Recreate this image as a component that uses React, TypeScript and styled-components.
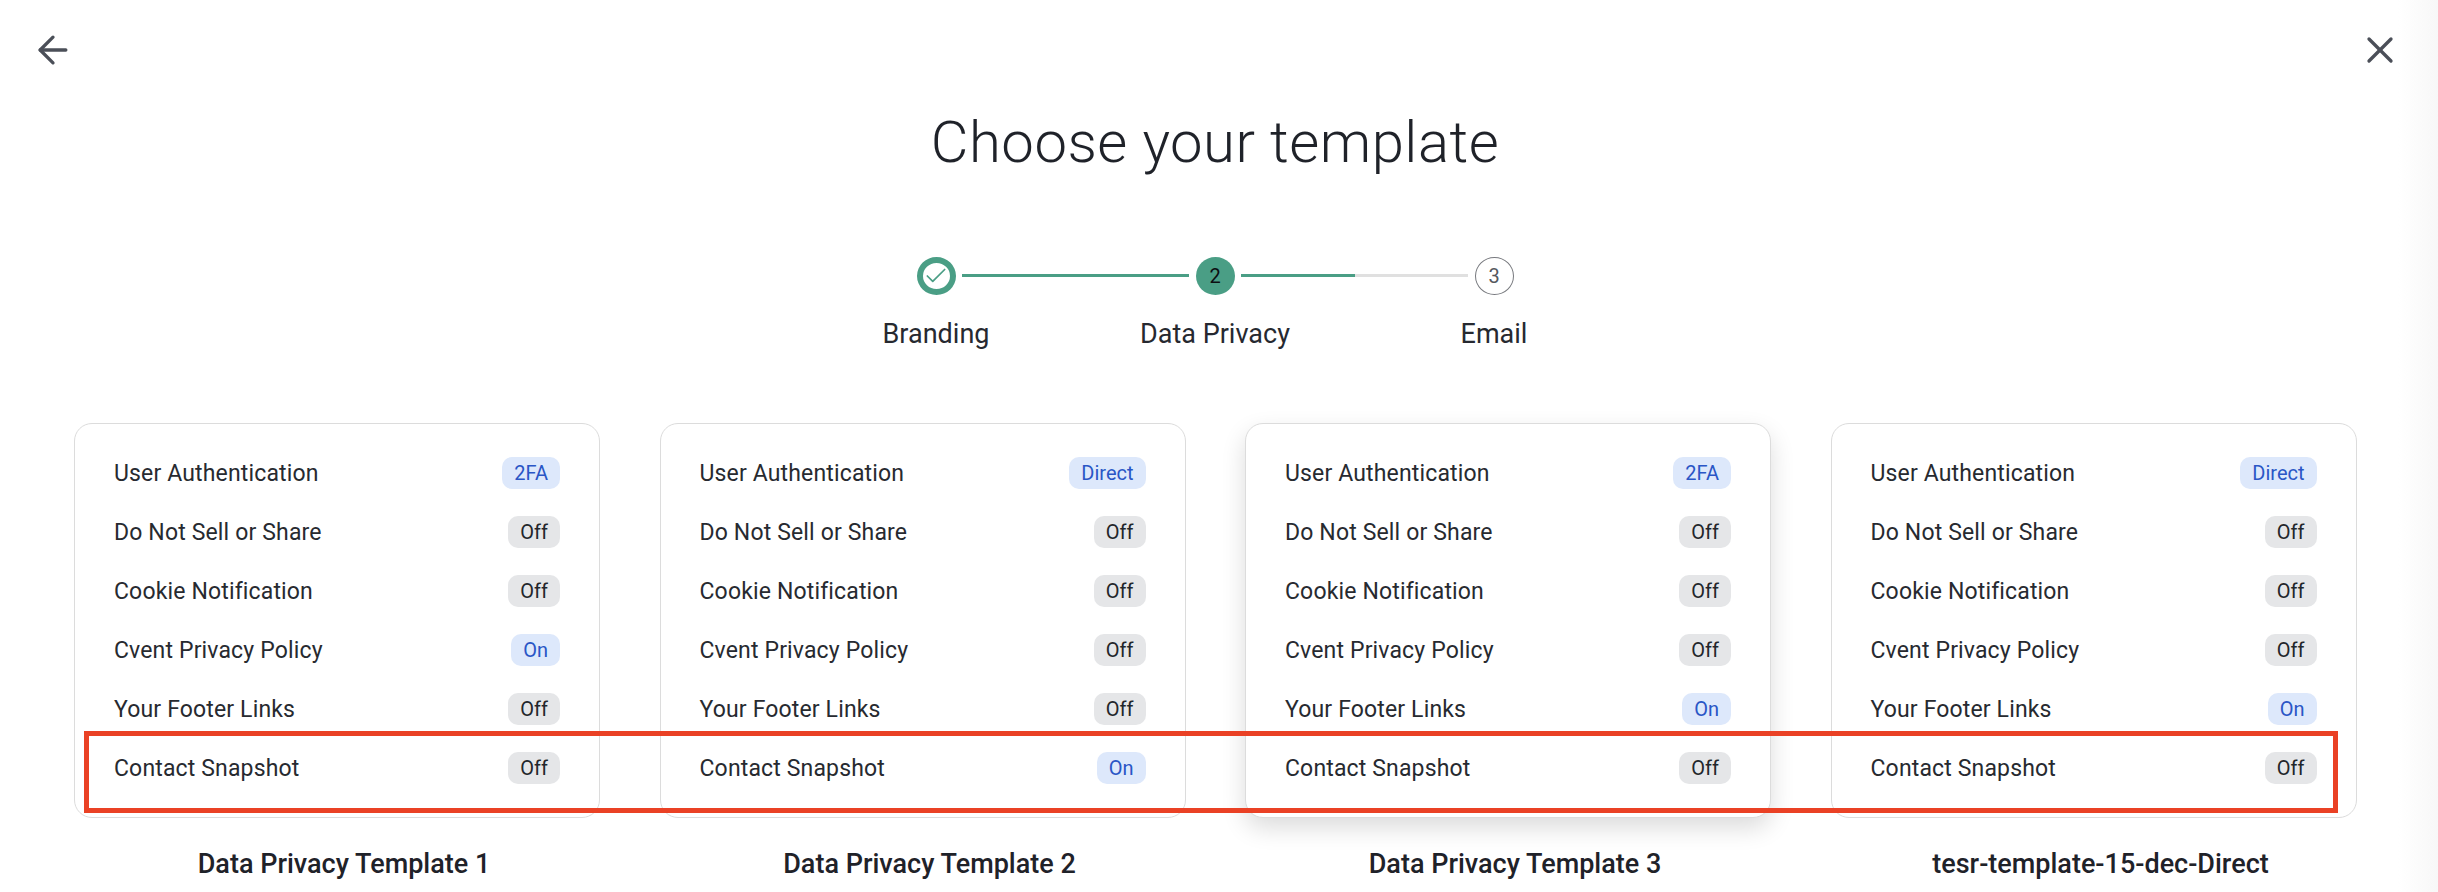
import React from 'react';
import styled, { createGlobalStyle } from 'styled-components';
import { ArrowLeft, X, Check } from 'lucide-react';

type Row = { name: string; value: string };

const rowNames = [
  'User Authentication',
  'Do Not Sell or Share',
  'Cookie Notification',
  'Cvent Privacy Policy',
  'Your Footer Links',
  'Contact Snapshot',
];

const templates = [
  { title: 'Data Privacy Template 1', values: ['2FA', 'Off', 'Off', 'On', 'Off', 'Off'], hovered: false },
  { title: 'Data Privacy Template 2', values: ['Direct', 'Off', 'Off', 'Off', 'Off', 'On'], hovered: false },
  { title: 'Data Privacy Template 3', values: ['2FA', 'Off', 'Off', 'Off', 'On', 'Off'], hovered: true },
  { title: 'tesr-template-15-dec-Direct', values: ['Direct', 'Off', 'Off', 'Off', 'On', 'Off'], hovered: false },
];

const GlobalStyle = createGlobalStyle`
  html, body {
    margin: 0;
    padding: 0;
    background: #fff;
    overflow: hidden;
  }
  * {
    box-sizing: border-box;
  }
`;

const Page = styled.div`
  position: relative;
  width: 2438px;
  height: 892px;
  overflow: hidden;
  background: #fff;
  color: #22252b;
  font-family: Roboto, "Liberation Sans", sans-serif;
`;

const EdgeShade = styled.div`
  position: absolute;
  top: 0;
  right: 0;
  bottom: 0;
  width: 40px;
  background: linear-gradient(to right, rgba(240, 240, 240, 0), rgba(240, 240, 240, 0.5));
  pointer-events: none;
`;

const TopBar = styled.div`
  display: flex;
  justify-content: space-between;
  padding: 28px 36px 0 31px;
  color: #4b4f58;
`;

const IconButton = styled.button`
  display: flex;
  width: 44px;
  height: 44px;
  padding: 0;
  border: 0;
  background: none;
  color: inherit;
  cursor: pointer;
`;

const Title = styled.h1`
  margin: 34px 8px 0 0;
  font-size: 58px;
  line-height: 72px;
  font-weight: 300;
  letter-spacing: 0.5px;
  text-align: center;
  color: #1f2229;
`;

const Stepper = styled.div`
  display: grid;
  grid-template-columns: repeat(3, 279px);
  justify-content: center;
  margin: 79px 8px 0 0;
`;

const Step = styled.div`
  display: flex;
  flex-direction: column;
  align-items: center;
  position: relative;
`;

const Circle = styled.div<{ $state: 'done' | 'active' | 'todo' }>`
  display: flex;
  align-items: center;
  justify-content: center;
  width: 39px;
  height: 38px;
  border-radius: 50%;
  font-size: 20px;
  background: ${p => (p.$state === 'active' ? '#4a9e85' : '#fff')};
  color: ${p => (p.$state === 'active' ? '#0c0f12' : p.$state === 'done' ? '#4a9e85' : '#55585e')};
  border: ${p => (p.$state === 'done' ? '6px solid #4a9e85' : p.$state === 'todo' ? '1px solid #77797e' : '0')};
`;

/* connector running from a step circle to the next one */
const Connector = styled.div<{ $fill: number }>`
  position: absolute;
  top: 17px;
  left: calc(50% + 26px);
  width: 227px;
  height: 3px;
  background: linear-gradient(
    to right,
    #4a9e85 ${p => p.$fill}%,
    #e0e0e0 ${p => p.$fill}%
  );
`;

const StepLabel = styled.div`
  margin-top: 24px;
  font-size: 27px;
  line-height: 30px;
  color: #262930;
`;

const CardsArea = styled.div`
  position: relative;
  display: grid;
  grid-template-columns: repeat(4, 526px);
  column-gap: 59.5px;
  margin: 74px 0 0 74px;
`;

const Column = styled.div`
  display: flex;
  flex-direction: column;
  align-items: center;
`;

const Card = styled.div<{ $hovered: boolean }>`
  display: flex;
  flex-direction: column;
  gap: 27px;
  width: 100%;
  height: 395px;
  padding: 33px 39px;
  border: 1px solid #dcdcdc;
  border-radius: 18px;
  background: #fff;
  box-shadow: ${p => (p.$hovered ? '0 10px 24px rgba(0, 0, 0, 0.14)' : 'none')};
`;

const CardRow = styled.div`
  display: flex;
  align-items: center;
  justify-content: space-between;
  height: 32px;
  font-size: 23px;
  letter-spacing: 0.15px;
  color: #272a30;
`;

const Badge = styled.span<{ $on: boolean }>`
  display: flex;
  align-items: center;
  height: 32px;
  padding: 0 12px;
  border-radius: 10px;
  font-size: 20px;
  letter-spacing: 0;
  background: ${p => (p.$on ? '#dde8fb' : '#e5e6e8')};
  color: ${p => (p.$on ? '#2a56c6' : '#23262b')};
`;

const CardTitle = styled.div`
  margin-top: 29px;
  padding-left: 14px;
  font-size: 27px;
  line-height: 34px;
  font-weight: 500;
  color: #1f2229;
`;

const Highlight = styled.div`
  position: absolute;
  top: 308px;
  left: 10px;
  width: 2254px;
  height: 82px;
  border: 5px solid #ea4125;
  pointer-events: none;
`;

const TemplateRow: React.FC<Row> = ({ name, value }) => (
  <CardRow>
    <span>{name}</span>
    <Badge $on={value !== 'Off'}>{value}</Badge>
  </CardRow>
);

export default function App() {
  return (
    <Page>
      <GlobalStyle />
      <TopBar>
        <IconButton aria-label="Back">
          <ArrowLeft size={44} strokeWidth={1.8} />
        </IconButton>
        <IconButton aria-label="Close">
          <X size={44} strokeWidth={1.8} />
        </IconButton>
      </TopBar>
      <Title>Choose your template</Title>
      <Stepper>
        <Step>
          <Circle $state="done">
            <Check size={26} strokeWidth={1.6} />
          </Circle>
          <Connector $fill={100} />
          <StepLabel>Branding</StepLabel>
        </Step>
        <Step>
          <Circle $state="active">2</Circle>
          <Connector $fill={50} />
          <StepLabel>Data Privacy</StepLabel>
        </Step>
        <Step>
          <Circle $state="todo">3</Circle>
          <StepLabel>Email</StepLabel>
        </Step>
      </Stepper>
      <CardsArea>
        {templates.map(t => (
          <Column key={t.title}>
            <Card $hovered={t.hovered}>
              {rowNames.map((name, i) => (
                <TemplateRow key={name} name={name} value={t.values[i]} />
              ))}
            </Card>
            <CardTitle>{t.title}</CardTitle>
          </Column>
        ))}
        <Highlight />
      </CardsArea>
      <EdgeShade />
    </Page>
  );
}
